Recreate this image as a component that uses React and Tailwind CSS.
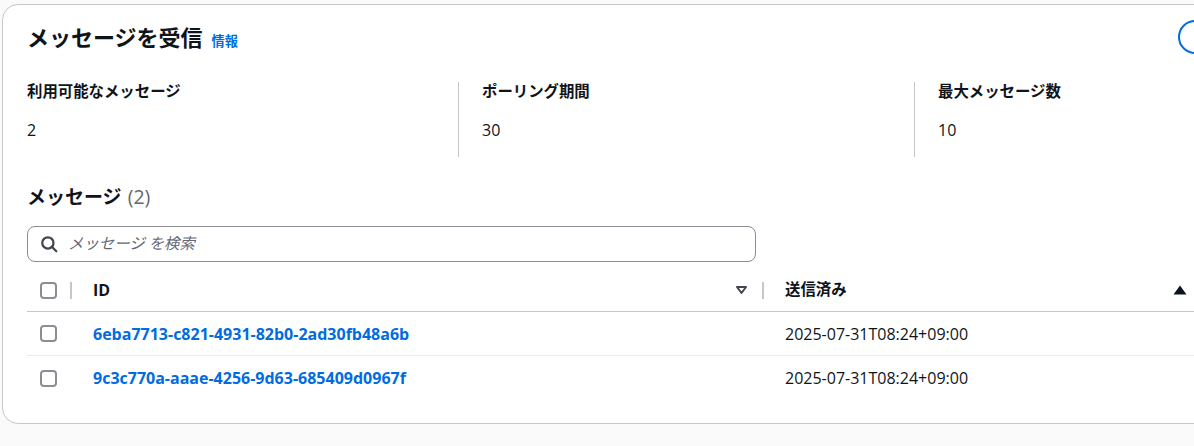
import React from "react";

const FONT = { fontFamily: '"Open Sans", "Noto Sans CJK JP", sans-serif' };

function Checkbox() {
  return <div className="w-[17px] h-[17px] rounded-[4px] border-2 border-[#8c8c94] bg-white shrink-0" />;
}

function Divider() {
  return <div className="w-[2px] h-[17px] bg-[#c6c6cd] shrink-0" />;
}

export default function App() {
  const rows = [
    { id: "6eba7713-c821-4931-82b0-2ad30fb48a6b", sent: "2025-07-31T08:24+09:00" },
    { id: "9c3c770a-aaae-4256-9d63-685409d0967f", sent: "2025-07-31T08:24+09:00" },
  ];
  return (
    <div className="w-[1194px] h-[446px] overflow-hidden bg-[#fafafa] text-[#0f141a]" style={FONT}>
      <div className="ml-[2px] mt-[4px] w-[1235px] h-[420px] rounded-[16px] border border-[#c6c6cd] bg-white px-[24px] pt-[15px]">
        <div className="flex items-center justify-between h-[34px]">
          <div className="flex items-baseline gap-[9px]">
            <h2 className="text-[22px] font-bold leading-[30px]">メッセージを受信</h2>
            <span className="text-[13.2px] font-bold text-[#006ce0]">情報</span>
          </div>
          <div className="w-[34px] h-[34px] rounded-full border-2 border-[#006ce0]" />
        </div>

        <div className="flex mt-[28px] h-[75px]">
          <div className="w-[431px]">
            <div className="text-[15.4px] font-bold leading-[20px]">利用可能なメッセージ</div>
            <div className="text-[16px] leading-[20px] mt-[18px]">2</div>
          </div>
          <div className="w-[456px] border-l border-[#c6c6cd] pl-[23px]">
            <div className="text-[15.4px] font-bold leading-[20px]">ポーリング期間</div>
            <div className="text-[16px] leading-[20px] mt-[18px]">30</div>
          </div>
          <div className="border-l border-[#c6c6cd] pl-[23px]">
            <div className="text-[15.4px] font-bold leading-[20px]">最大メッセージ数</div>
            <div className="text-[16px] leading-[20px] mt-[18px]">10</div>
          </div>
        </div>

        <div className="mt-[27px] flex items-baseline gap-[6px]">
          <h3 className="text-[19px] font-bold leading-[26px]">メッセージ</h3>
          <span className="text-[19.5px] leading-[26px] text-[#656871]">(2)</span>
        </div>

        <div className="mt-[16px] w-[729px] h-[36px] rounded-[8px] border border-[#8c8c94] flex items-center pl-[12px] gap-[10px]">
          <svg width="18" height="18" viewBox="0 0 16 16" fill="none" stroke="#424650" strokeWidth="2" strokeLinecap="round">
            <circle cx="7" cy="7" r="5" />
            <path d="M10.5 10.5L14.5 14.5" />
          </svg>
          <span className="text-[15.4px] italic text-[#656871]">メッセージ を検索</span>
        </div>

        <div className="mt-[7px]">
          <div className="flex items-center h-[43px] border-b border-[#c6c6cd]">
            <div className="w-[43px] pl-[13px] flex items-center"><Checkbox /></div>
            <Divider />
            <div className="w-[690px] flex items-center justify-between pl-[21px] pr-[14px]">
              <span className="text-[16px] font-bold">ID</span>
              <svg width="13" height="10" viewBox="0 0 13 10" fill="none" stroke="#424650" strokeWidth="2" strokeLinejoin="round">
                <path d="M2 2H11L6.5 8Z" />
              </svg>
            </div>
            <Divider />
            <div className="flex-1 flex items-center justify-between pl-[21px] pr-[25px]">
              <span className="text-[15.4px] font-bold">送信済み</span>
              <svg width="14" height="10" viewBox="0 0 14 10">
                <path d="M0.5 9.5H13.5L7 0.5Z" fill="#0f141a" />
              </svg>
            </div>
          </div>
          {rows.map((r, i) => (
            <div key={r.id} className={`flex items-center h-[44px] ${i === 0 ? "border-b border-[#ebebf0]" : ""}`}>
              <div className="w-[45px] pl-[13px] flex items-center"><Checkbox /></div>
              <div className="w-[692px] pl-[21px]">
                <span className="text-[16px] font-bold text-[#006ce0]">{r.id}</span>
              </div>
              <div className="pl-[21px] text-[16px]">{r.sent}</div>
            </div>
          ))}
        </div>
      </div>
    </div>
  );
}
